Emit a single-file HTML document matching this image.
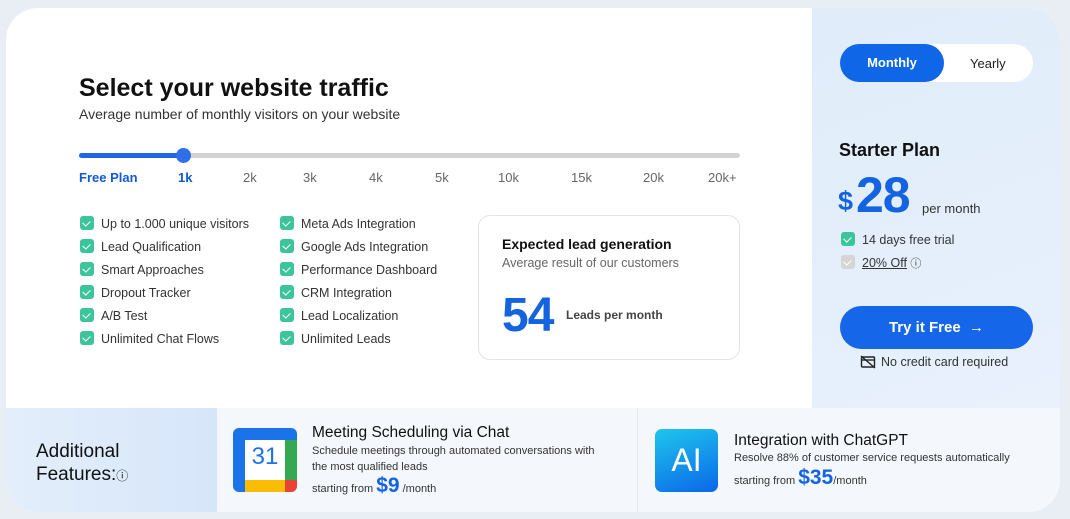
<!DOCTYPE html>
<html><head><style>
*{margin:0;padding:0;box-sizing:border-box}
body{width:1070px;height:519px;background:#e9eef5;font-family:"Liberation Sans",sans-serif;position:relative;overflow:hidden;color:#111}
.a{position:absolute}
.card{left:6px;top:8px;width:1054px;height:504px;border-radius:32px;background:#fff;overflow:hidden}
.chk{display:inline-block;width:14px;height:14px;border-radius:3px;background:#3cc49a;vertical-align:-2px;margin-right:7px;position:relative}
.chk:after{content:"";position:absolute;left:4px;top:2.5px;width:4px;height:6px;border:solid #fff;border-width:0 1.6px 1.6px 0;transform:rotate(45deg)}
.feat{font-size:12.5px;color:#333;line-height:23px}
.tick{font-size:13px;color:#666;top:170px}
</style></head><body>
<div class="a card">
 <div class="a" style="left:806px;top:0;width:248px;height:400px;background:linear-gradient(160deg,#e0ecfa,#e8f1fc)"></div>
 <div class="a" style="left:0;top:400px;width:211px;height:104px;background:linear-gradient(90deg,#e3eefb,#d6e6f9)"></div>
 <div class="a" style="left:211px;top:400px;width:843px;height:104px;background:#f4f7fb"></div>
 <div class="a" style="left:631px;top:400px;width:1px;height:104px;background:#e3e8ef"></div>
</div>
<div class="a" style="left:79px;top:74px;font-size:25px;font-weight:bold;color:#111">Select your website traffic</div>
<div class="a" style="left:79px;top:106px;font-size:14px;color:#333">Average number of monthly visitors on your website</div>
<div class="a" style="left:79px;top:153px;width:661px;height:5px;border-radius:3px;background:#d3d3d3"></div>
<div class="a" style="left:79px;top:153px;width:105px;height:5px;border-radius:3px;background:#1e66e6"></div>
<div class="a" style="left:176px;top:148px;width:15px;height:15px;border-radius:50%;background:#2f6fe8"></div>
<div class="a tick" style="left:79px;color:#1259d4;font-weight:bold">Free Plan</div>
<div class="a tick" style="left:178px;color:#1259d4;font-weight:bold">1k</div>
<div class="a tick" style="left:243px">2k</div>
<div class="a tick" style="left:303px">3k</div>
<div class="a tick" style="left:369px">4k</div>
<div class="a tick" style="left:435px">5k</div>
<div class="a tick" style="left:498px">10k</div>
<div class="a tick" style="left:571px">15k</div>
<div class="a tick" style="left:643px">20k</div>
<div class="a tick" style="left:708px">20k+</div>
<div class="a feat" style="left:80px;top:213px"><div><span class="chk"></span>Up to 1.000 unique visitors</div><div><span class="chk"></span>Lead Qualification</div><div><span class="chk"></span>Smart Approaches</div><div><span class="chk"></span>Dropout Tracker</div><div><span class="chk"></span>A/B Test</div><div><span class="chk"></span>Unlimited Chat Flows</div></div>
<div class="a feat" style="left:280px;top:213px"><div><span class="chk"></span>Meta Ads Integration</div><div><span class="chk"></span>Google Ads Integration</div><div><span class="chk"></span>Performance Dashboard</div><div><span class="chk"></span>CRM Integration</div><div><span class="chk"></span>Lead Localization</div><div><span class="chk"></span>Unlimited Leads</div></div>
<div class="a" style="left:478px;top:215px;width:262px;height:145px;border:1px solid #e3e3e3;border-radius:12px"></div>
<div class="a" style="left:502px;top:236px;font-size:14px;font-weight:bold">Expected lead generation</div>
<div class="a" style="left:502px;top:256px;font-size:12.5px;color:#666">Average result of our customers</div>
<div class="a" style="left:502px;top:288px;font-size:48px;font-weight:bold;color:#1463e0;letter-spacing:-1px">54</div>
<div class="a" style="left:566px;top:308px;font-size:12px;font-weight:bold;color:#444">Leads per month</div>
<div class="a" style="left:840px;top:44px;width:193px;height:38px;border-radius:19px;background:#fff"></div>
<div class="a" style="left:840px;top:44px;width:104px;height:38px;border-radius:19px;background:#0f66e6;color:#fff;font-weight:bold;font-size:13px;text-align:center;line-height:38px">Monthly</div>
<div class="a" style="left:970px;top:56px;font-size:13px;color:#222">Yearly</div>
<div class="a" style="left:839px;top:140px;font-size:18px;font-weight:bold">Starter Plan</div>
<div class="a" style="left:838px;top:186px;font-size:27px;font-weight:bold;color:#1463e0">$</div>
<div class="a" style="left:856px;top:166px;font-size:50px;font-weight:bold;color:#1463e0;letter-spacing:-1px">28</div>
<div class="a" style="left:922px;top:201px;font-size:13px;color:#333">per month</div>
<div class="a feat" style="left:841px;top:229px"><div><span class="chk"></span>14 days free trial</div><div><span class="chk" style="background:#d5d5d5"></span><u>20% Off</u> <span style="font-size:11px">ⓘ</span></div></div>
<div class="a" style="left:840px;top:306px;width:193px;height:43px;border-radius:22px;background:#1566e8;color:#fff;font-weight:bold;font-size:15px;text-align:center;line-height:43px">Try it Free &nbsp;→</div>
<svg class="a" style="left:860px;top:355px" width="16" height="14" viewBox="0 0 16 14"><rect x="1.5" y="2" width="13" height="10" rx="1" fill="none" stroke="#222" stroke-width="1.4"/><line x1="1.5" y1="5" x2="14.5" y2="5" stroke="#222" stroke-width="1.4"/><line x1="1" y1="1" x2="15" y2="13" stroke="#222" stroke-width="1.4"/></svg>
<div class="a" style="left:881px;top:355px;font-size:12.5px;color:#333">No credit card required</div>
<div class="a" style="left:36px;top:440px;font-size:19px;line-height:23px;color:#111">Additional<br>Features:<span style="font-size:12px">ⓘ</span></div>
<div class="a" style="left:233px;top:428px;width:64px;height:64px;border-radius:6px;background:#1a73e8;overflow:hidden">
 <div class="a" style="left:12px;top:12px;width:40px;height:40px;background:#fff"></div>
 <div class="a" style="left:52px;top:12px;width:12px;height:40px;background:#34a853"></div>
 <div class="a" style="left:12px;top:52px;width:40px;height:12px;background:#fbbc04"></div>
 <div class="a" style="left:52px;top:52px;width:12px;height:12px;background:#ea4335"></div>
 <div class="a" style="left:12px;top:15px;width:40px;text-align:center;font-size:24px;color:#1a73e8">31</div>
</div>
<div class="a" style="left:312px;top:424px;font-size:15.5px;color:#111">Meeting Scheduling via Chat</div>
<div class="a" style="left:312px;top:443px;font-size:11px;line-height:16px;color:#333">Schedule meetings through automated conversations with<br>the most qualified leads</div>
<div class="a" style="left:312px;top:474px;font-size:11px;color:#333">starting from <b style="font-size:21px;color:#1463e0">$9</b> /month</div>
<div class="a" style="left:655px;top:429px;width:63px;height:63px;border-radius:7px;background:linear-gradient(160deg,#1fc6ee,#0a67e8);color:#fff;font-size:32px;text-align:center;line-height:63px">AI</div>
<div class="a" style="left:734px;top:432px;font-size:15.5px;color:#111">Integration with ChatGPT</div>
<div class="a" style="left:734px;top:452px;font-size:11px;color:#333">Resolve 88% of customer service requests automatically</div>
<div class="a" style="left:734px;top:466px;font-size:11px;color:#333">starting from <b style="font-size:21px;color:#1463e0">$35</b>/month</div>
</body></html>
